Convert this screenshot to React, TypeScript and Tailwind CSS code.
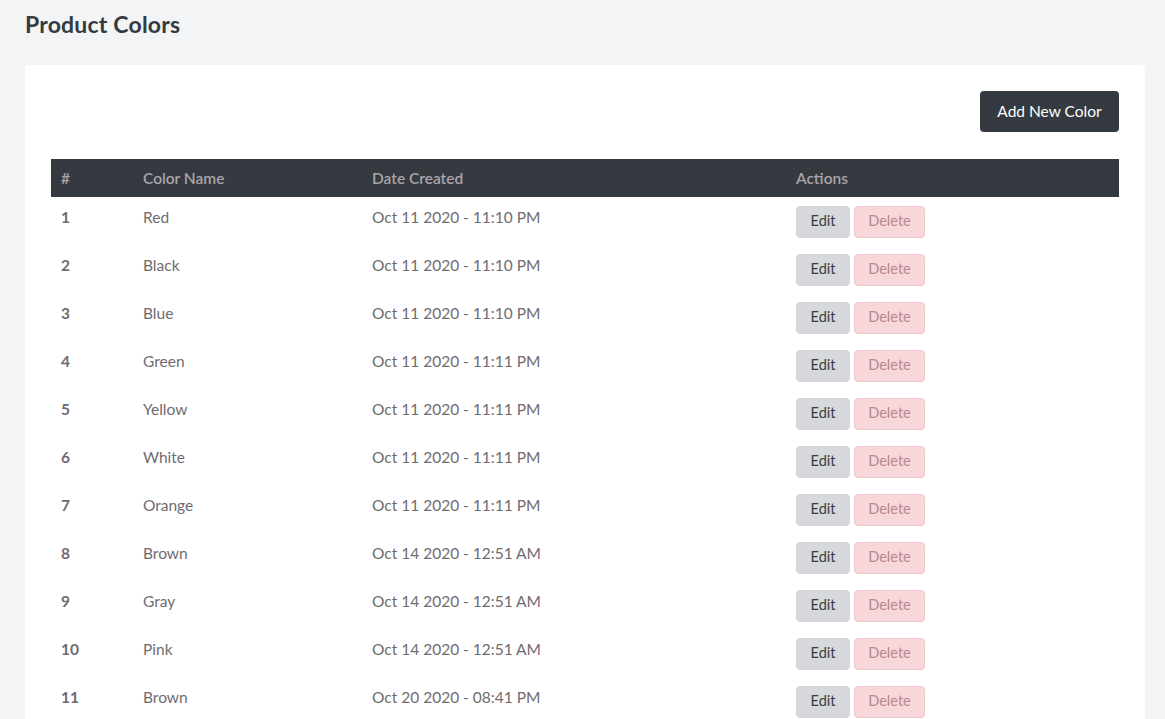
const colors = [
  { id: 1, name: "Red", date: "Oct 11 2020 - 11:10 PM" },
  { id: 2, name: "Black", date: "Oct 11 2020 - 11:10 PM" },
  { id: 3, name: "Blue", date: "Oct 11 2020 - 11:10 PM" },
  { id: 4, name: "Green", date: "Oct 11 2020 - 11:11 PM" },
  { id: 5, name: "Yellow", date: "Oct 11 2020 - 11:11 PM" },
  { id: 6, name: "White", date: "Oct 11 2020 - 11:11 PM" },
  { id: 7, name: "Orange", date: "Oct 11 2020 - 11:11 PM" },
  { id: 8, name: "Brown", date: "Oct 14 2020 - 12:51 AM" },
  { id: 9, name: "Gray", date: "Oct 14 2020 - 12:51 AM" },
  { id: 10, name: "Pink", date: "Oct 14 2020 - 12:51 AM" },
  { id: 11, name: "Brown", date: "Oct 20 2020 - 08:41 PM" },
];

function App() {
  return (
    <div className="min-h-screen bg-[#f3f4f6] pl-[25px] pr-[20px] pt-[9px] font-['Lato','Open_Sans',sans-serif]">
      <h1 className="text-[23px] font-bold leading-[30px] tracking-[0.2px] text-[#343a40]">Product Colors</h1>
      <div className="mt-[26px] rounded bg-white px-[26px] pt-[26px] pb-4">
        <div className="flex justify-end">
          <button className="h-[41px] w-[139px] rounded bg-[#343a40] text-[15.5px] text-white">
            Add New Color
          </button>
        </div>
        <table className="mt-[27px] w-full text-left text-[15.5px]">
          <thead>
            <tr className="h-[38px] bg-[#343a40] text-[#aaa4a9]">
              <th className="w-[82px] pl-[10px] pt-[2px] font-semibold">#</th>
              <th className="w-[229px] pl-[10px] pt-[2px] font-semibold">Color Name</th>
              <th className="w-[424px] pl-[10px] pt-[2px] font-semibold">Date Created</th>
              <th className="pl-[10px] pt-[2px] font-semibold">Actions</th>
            </tr>
          </thead>
          <tbody className="text-[#6f6b70]">
            {colors.map((c) => (
              <tr key={c.id} className="h-[48px] align-top">
                <td className="pl-[10px] pt-[9px] font-bold">{c.id}</td>
                <td className="pl-[10px] pt-[9px]">{c.name}</td>
                <td className="pl-[10px] pt-[9px]">{c.date}</td>
                <td className="pl-[10px] pt-[9px]">
                  <div className="flex gap-1">
                    <button className="h-[32px] w-[54px] rounded-sm border border-[#d3d5d8] bg-[#d6d8db] pb-[3px] text-[14.5px] text-[#383d41]">
                      Edit
                    </button>
                    <button className="h-[32px] w-[71px] rounded-sm border border-[#f5c6cb] bg-[#f8d7da] pb-[3px] text-[14.5px] text-[#b88890]">
                      Delete
                    </button>
                  </div>
                </td>
              </tr>
            ))}
          </tbody>
        </table>
      </div>
    </div>
  );
}

export default App;
